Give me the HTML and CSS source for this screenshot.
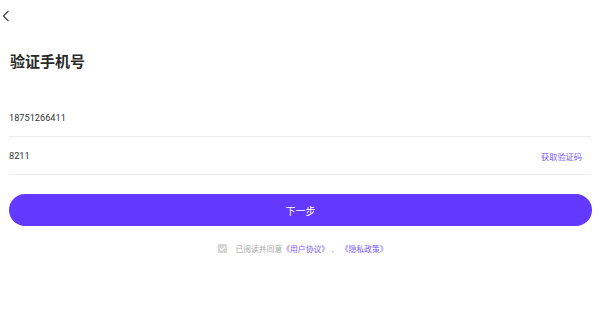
FILE: index.html
```html
<!DOCTYPE html>
<html lang="zh">
<head>
<meta charset="utf-8">
<link rel="stylesheet" href="styles.css">
</head>
<body>
<div class="page">
  <div class="nav">
    <svg class="back" width="8" height="12" viewBox="0 0 8 12"><path d="M6.5 0.8 L1.5 6 L6.5 11.2" fill="none" stroke="#333" stroke-width="1.1"/></svg>
  </div>
  <h1 class="title">验证手机号</h1>
  <div class="form">
    <div class="row">18751266411</div>
    <div class="row"><span>8211</span><span class="code">获取验证码</span></div>
  </div>
  <button class="btn">下一步</button>
  <div class="agree">
    <svg class="check" width="9" height="9" viewBox="0 0 10 10"><rect width="10" height="10" rx="1" fill="#d6d6d6"/><path d="M2.3 5.1 L4.2 7 L7.8 3.2" fill="none" stroke="#fff" stroke-width="1.2"/></svg>
    <span>已阅读并同意<span class="link">《用户协议》</span> 、 <span class="link">《隐私政策》</span></span>
  </div>
</div>
</body>
</html>
```
FILE: styles.css
```css
* { box-sizing: border-box; }
html, body { margin: 0; padding: 0; background: #fff; }
body { font-family: Roboto, "Noto Sans CJK SC", sans-serif; color: #333; }
.page { width: 600px; height: 325px; padding: 0 9px; }
.nav { height: 34px; display: flex; align-items: center; margin-left: -7px; padding-bottom: 2px; }
.back { display: block; }
.title { margin: 17px 0 0 1px; font-size: 15px; line-height: 22px; font-weight: 700; color: #2a2a2a; }
.form { margin-top: 26px; }
.row { height: 38px; display: flex; align-items: center; justify-content: space-between; font-size: 9.2px; color: #333; border-bottom: 1px solid #ececec; }
.code { font-size: 8.2px; color: #7a5cf5; margin-right: 9px; }
.btn { display: block; width: 583px; height: 32px; margin-top: 19px; border: 0; border-radius: 16px; background: #6439ff; color: #fff; font-family: Roboto, "Noto Sans CJK SC", sans-serif; font-size: 10px; padding: 0; }
.agree { margin-top: 17px; display: flex; align-items: center; justify-content: center; font-size: 7.8px; color: #aaa; gap: 8px; margin-left: 6px; }
.check { display: block; }
.link { color: #7a5cf5; }
```
